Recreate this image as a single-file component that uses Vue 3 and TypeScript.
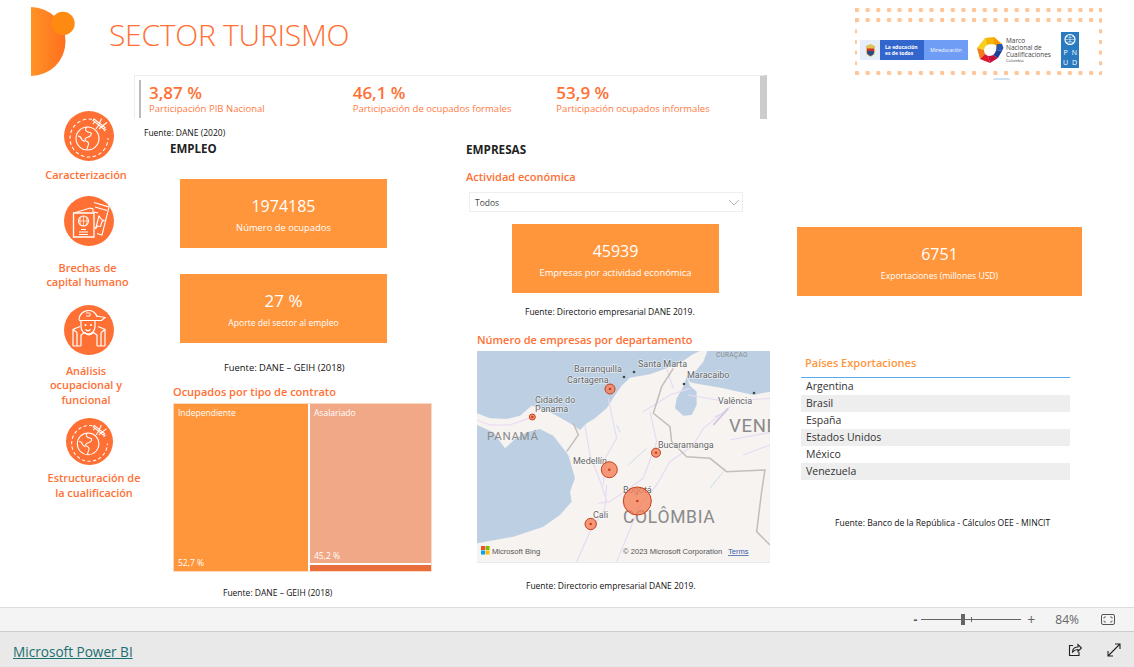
<script setup lang="ts">
const kpis = [
  { value: '3,87 %', label: 'Participación PIB Nacional' },
  { value: '46,1 %', label: 'Participación de ocupados formales' },
  { value: '53,9 %', label: 'Participación ocupados informales' },
]
const countries = ['Argentina', 'Brasil', 'España', 'Estados Unidos', 'México', 'Venezuela']
const bubbles = [
  { x: 133, y: 38, r: 5 },
  { x: 55.3, y: 66, r: 3 },
  { x: 132.3, y: 118.7, r: 8 },
  { x: 179, y: 101.7, r: 4.5 },
  { x: 160.3, y: 150, r: 14 },
  { x: 113.7, y: 173, r: 5.7 },
]
const cities = [
  { name: 'Barranquilla', x: 97, y: 21 },
  { name: 'Cartagena', x: 90, y: 32 },
  { name: 'Santa Marta', x: 161, y: 16 },
  { name: 'Maracaibo', x: 210, y: 27 },
  { name: 'Valência', x: 241, y: 53 },
  { name: 'Cidade do', x: 58, y: 52 },
  { name: 'Panamá', x: 58, y: 61 },
  { name: 'Bucaramanga', x: 181, y: 97 },
  { name: 'Medellín', x: 96, y: 113 },
  { name: 'Bogotá', x: 146, y: 142 },
  { name: 'Cali', x: 116, y: 167 },
]
</script>

<template>
  <div class="page">
    <div class="report">
      <header class="top">
        <div class="brand">
          <svg class="logo" width="50" height="80" viewBox="0 0 50 80">
            <defs>
              <linearGradient id="lg" x1="0" x2="1">
                <stop offset="0" stop-color="#ff9326" />
                <stop offset="1" stop-color="#ff6f1f" />
              </linearGradient>
            </defs>
            <path d="M0 7a34.5 34.5 0 0 1 0 69z" fill="url(#lg)" />
            <circle cx="32" cy="23.5" r="11.7" fill="#ff8a12" />
          </svg>
          <h1>SECTOR TURISMO</h1>
        </div>
        <div class="logos">
          <div class="logo-row">
            <div class="mined">
              <span class="shield">
                <svg width="13" height="15" viewBox="0 0 13 15">
                  <path d="M2 3l4.5-2L11 3v6c0 3-3 4-4.5 5C5 13 2 12 2 9z" fill="#e2c05a" />
                  <path d="M3 8h7v1.5c0 2-2 3-3.500 3.500C5 12.500 3 11.500 3 9.500z" fill="#2c4a8c" />
                  <path d="M3 5.5h7V8H3z" fill="#c9302c" />
                </svg>
              </span>
              <span class="edu">La educación<br />es de todos</span>
              <span class="min">Mineducación</span>
            </div>
            <svg class="mnc-logo" width="28" height="28" viewBox="0 0 28 28">
              <path d="M9 2l9-1 2 7-5 .5-4 1.5z" fill="#f7b500" />
              <path d="M18 1l8 7-5 6-1-4.5-2-1.500z" fill="#f59b00" />
              <path d="M1 12l8-10 2 8-3 4z" fill="#f8cf1e" />
              <path d="M1 12l7 2 1 4-5 5z" fill="#ef7d1a" />
              <path d="M4 23l5-5 3 2 2 7z" fill="#e0162b" />
              <path d="M14 27l-2-7 5-1 5 3z" fill="#c2103f" />
              <path d="M22 22l-5-3 3-5 6 1z" fill="#1f3f94" />
              <path d="M26 15l-6-1 1-6 5 0 1.5 4z" fill="#2a55b0" />
              <circle cx="14" cy="14" r="5.8" fill="#fff" />
            </svg>
            <div class="mnc">Marco<br />Nacional de<br />Cualificaciones<small>Colombia</small></div>
            <div class="undp">
              <svg class="globe" width="18" height="16" viewBox="0 0 18 16">
                <circle cx="9" cy="7.5" r="5" fill="none" stroke="#fff" stroke-width="1.2" />
                <path d="M4 7.5h10M9 2.5v10M5 4c3 2 5 2 8 0M5 11c3-2 5-2 8 0" fill="none" stroke="#fff" stroke-width=".5" />
              </svg>
              <b>P</b><b>N</b><b>U</b><b>D</b>
            </div>
          </div>
          <div class="arc"></div>
        </div>
      </header>

      <section class="kpis">
        <div class="kpi-wrap">
          <div v-for="k in kpis" :key="k.label" class="kpi">
            <strong>{{ k.value }}</strong>
            <span>{{ k.label }}</span>
          </div>
        </div>
      </section>

      <main class="body">
        <nav class="side">
          <div class="nav-item first">
            <svg class="ico" viewBox="0 0 50 50">
              <circle cx="25" cy="25" r="25" fill="#ff7034" />
              <g fill="none" stroke="#fff" stroke-width="1.1">
                <path d="M28 8.300A19 19 0 1 0 44 27" stroke-dasharray="3.5 2.5" />
                <circle cx="23.5" cy="27.5" r="11.5" />
                <path d="M23 16c-2.500 2-1.500 4 1 5s4 0 3 3-5 1.500-6 4 3 2 3.500 4-1.500 4-1.500 6.500" />
                <path d="M14 25c2 0 3 1 3.500 3s2.500 1 3 3" />
                <path d="M30 8l11 8.500-1.300 1.500L29 9.500zM37.500 7.500l-2.500 6-3 4.500M43 11.500l-4 3-4 3.500M29 13l2-2.500M40 20l2-2" />
              </g>
            </svg>
            <span class="nav-label">Caracterización</span>
          </div>
          <div class="nav-item second">
            <svg class="ico" viewBox="0 0 50 50">
              <circle cx="25" cy="25" r="25" fill="#ff7034" />
              <g fill="none" stroke="#fff" stroke-width="1.1">
                <path d="M30 6.500l15 4.500-7 28-5-1.500" />
                <path d="M31 11l12 3.500M30 16l4 1" />
                <path d="M35 20l-3.500 13 2-3 3 .5 1.500-5 2-1-2.500-1z" />
                <path d="M10 17l16-5 3 1v3" />
                <path d="M9.500 17h20.500v24H9.500z" stroke-width="1.3" />
                <circle cx="19.5" cy="25" r="5" />
                <path d="M14.5 25h10M19.5 20v10M17 21c-1.500 2.500-1.500 5.500 0 8M22 21c1.500 2.500 1.500 5.500 0 8" stroke-width=".7" />
                <path d="M17 33.500h5M15 36h9M15 38.500h9" />
              </g>
            </svg>
            <span class="nav-label">Brechas de<br />capital humano</span>
          </div>
          <div class="nav-item third">
            <svg class="ico" viewBox="0 0 50 50">
              <circle cx="25" cy="25" r="25" fill="#ff7034" />
              <g fill="none" stroke="#fff" stroke-width="1.2">
                <path d="M15 15c0-11 16-13 18-3" />
                <path d="M15 15.500h18M33 11l8 1.500-3.500 3H33" />
                <path d="M22 8h4v3h-4" stroke-width=".9" />
                <path d="M17 15.500v6c0 10 14 10 14 0v-6" />
                <path d="M21.500 24.500c1.500 1.500 3.500 1.500 5 0" />
                <path d="M9 41V24.500l7-3M41 41V24.500l-7-3" />
                <path d="M13 41V27.500M37 41V27.500M9 24.500l4 3M41 24.500l-4 3" />
                <path d="M17 41V30l3.500-2.500M33 41V30l-3.500-2.500M20.500 27.500c3 3 6 3 9 0" />
                <path d="M9 41h8M33 41h8" />
              </g>
              <circle cx="21.5" cy="20" r="1" fill="#fff" /><circle cx="27" cy="20" r="1" fill="#fff" />
            </svg>
            <span class="nav-label">Análisis<br />ocupacional y<br />funcional</span>
          </div>
          <div class="nav-item fourth">
            <svg class="ico small" viewBox="0 0 50 50">
              <circle cx="25" cy="25" r="25" fill="#ff7034" />
              <g fill="none" stroke="#fff" stroke-width="1.1">
                <path d="M28 8.300A19 19 0 1 0 44 27" stroke-dasharray="3.5 2.5" />
                <circle cx="23.5" cy="27.5" r="11.5" />
                <path d="M23 16c-2.500 2-1.500 4 1 5s4 0 3 3-5 1.500-6 4 3 2 3.500 4-1.500 4-1.500 6.500" />
                <path d="M14 25c2 0 3 1 3.500 3s2.500 1 3 3" />
                <path d="M30 8l11 8.500-1.300 1.500L29 9.500zM37.500 7.500l-2.500 6-3 4.500M43 11.500l-4 3-4 3.500M29 13l2-2.500M40 20l2-2" />
              </g>
            </svg>
            <span class="nav-label">Estructuración de<br />la cualificación</span>
          </div>
        </nav>

        <section class="col-emp">
          <p class="src src-pib">Fuente: DANE (2020)</p>
          <h2 class="emp-title">EMPLEO</h2>
          <div class="card c1"><b>1974185</b><span>Número de ocupados</span></div>
          <div class="card c2"><b>27 %</b><span>Aporte del sector al empleo</span></div>
          <p class="src geih">Fuente: DANE – GEIH (2018)</p>
          <h3 class="tree-title">Ocupados por tipo de contrato</h3>
          <div class="tree">
            <div class="t-ind"><span>Independiente</span><span>52,7 %</span></div>
            <div class="t-right">
              <div class="t-asa"><span>Asalariado</span><span>45,2 %</span></div>
              <div class="t-other"></div>
            </div>
          </div>
          <p class="src geih2">Fuente: DANE – GEIH (2018)</p>
        </section>

        <section class="col-emps">
          <h2 class="emps-title">EMPRESAS</h2>
          <h3 class="act">Actividad económica</h3>
          <div class="select">
            <span>Todos</span>
            <svg width="12" height="7" viewBox="0 0 12 7"><path d="M1 1l5 5 5-5" fill="none" stroke="#b5b5b5" /></svg>
          </div>
          <div class="card c3"><b>45939</b><span>Empresas por actividad económica</span></div>
          <p class="src dir">Fuente: Directorio empresarial DANE 2019.</p>
          <h3 class="map-title">Número de empresas por departamento</h3>
          <svg class="map" width="293" height="212" viewBox="0 0 293 212">
            <rect width="293" height="212" fill="#bdd0e3" />
            <g transform="translate(-7 -6) scale(.3333)">
              <path d="M21 205L60 220 110 222 150 212 185 182 215 190 260 212 300 235 330 255 350 235 375 220 410 190 432 155 455 122 480 98 540 88 590 70 630 55 665 30 690 18 712 18 700 50 675 80 650 95 660 112 690 118 760 130 850 150 900 140V653H21V595L130 575 220 545 270 510 305 470 300 440 315 400 295 330 250 272 210 252 170 262 135 282 105 310 70 262 21 240Z" fill="#f6f3f0" />
              <path d="M650 95L640 125 620 160 615 190 640 212 665 210 680 180 680 140 660 122Z" fill="#bdd0e3" />
              <path d="M730 18l55 0 5 28-25 12-30-10z" fill="#bdd0e3" />
              <g fill="none" stroke="#e8daf4" stroke-width="3.5">
                <path d="M345 240L360 330 395 420 410 470" />
                <path d="M415 160L440 280 405 340 400 420" />
                <path d="M540 200L560 290 520 400 420 470 385 475" />
                <path d="M410 420L405 490 360 560 320 650" />
                <path d="M655 150L770 170 900 160" />
                <path d="M780 185L700 250 670 300 600 350 560 420 510 480 440 650" />
                <path d="M780 285L900 262M820 330L900 300" />
                <path d="M21 225L60 240 120 240 190 215" />
                <path d="M520 200L600 150 660 130M590 70L610 130" />
              </g>
              <path d="M730 240L775 190" fill="none" stroke="#d3c2e3" stroke-width="5" />
              <g fill="none" stroke="#c9ddec" stroke-width="3">
                <path d="M440 240L450 262M475 360L530 310M720 430L760 380M735 215L760 205" />
              </g>
              <g fill="none" stroke="#c2bebb" stroke-width="4.5">
                <path d="M310 235L325 270 290 320" />
                <path d="M610 70L575 125 550 205 600 245 605 290 650 335 720 340 770 380 885 375 875 440 860 560 900 600" />
              </g>
            </g>
            <g fill="#444">
              <circle cx="147" cy="26" r="1.3" /><circle cx="157" cy="21" r="1.3" /><circle cx="207" cy="33" r="1.3" /><circle cx="277" cy="42" r="1.3" />
            </g>
            <text x="239" y="6" class="tiny">CURAÇAO</text>
            <g class="big">
              <text x="10" y="89" font-size="11.5">PANAMÁ</text>
              <text x="252" y="81" font-size="18.5">VENE</text>
              <text x="146" y="172" font-size="17.5">COLÔMBIA</text>
            </g>
            <g class="lab">
              <text v-for="c in cities" :key="c.name" :x="c.x" :y="c.y">{{ c.name }}</text>
            </g>
            <g v-for="b in bubbles" :key="b.x">
              <circle :cx="b.x" :cy="b.y" :r="b.r" fill="#f4815a" fill-opacity=".8" stroke="#c8401a" />
              <circle :cx="b.x" :cy="b.y" r="1.3" fill="#c8401a" />
            </g>
            <g>
              <rect x="4" y="195" width="4" height="4" fill="#f25022" /><rect x="8.5" y="195" width="4" height="4" fill="#7fba00" />
              <rect x="4" y="199.5" width="4" height="4" fill="#00a4ef" /><rect x="8.5" y="199.5" width="4" height="4" fill="#ffb900" />
              <text x="15" y="203" class="attr">Microsoft Bing</text>
            </g>
            <text x="146" y="203" class="attr">© 2023 Microsoft Corporation</text>
            <text x="251" y="203" class="attr terms">Terms</text>
          </svg>
          <p class="src dir2">Fuente: Directorio empresarial DANE 2019.</p>
        </section>

        <section class="col-exp">
          <div class="card c4"><b>6751</b><span>Exportaciones (millones USD)</span></div>
          <h3 class="paises">Países Exportaciones</h3>
          <ul class="list">
            <li v-for="c in countries" :key="c">{{ c }}</li>
          </ul>
          <p class="src ban">Fuente: Banco de la República - Cálculos OEE - MINCIT</p>
        </section>
      </main>
    </div>

    <div class="zoombar">
      <span class="minus">-</span>
      <span class="slider"><i class="thumb"></i><i class="tick"></i></span>
      <span class="plus">+</span>
      <span class="pct">84%</span>
      <svg width="14" height="11" viewBox="0 0 14 11"><rect x=".5" y=".5" width="13" height="10" rx="1.5" fill="none" stroke="#555" /><path d="M3 4.500V3h2M11 6.500V8H9M3 6.500V8h2M11 4.500V3H9" fill="none" stroke="#555" stroke-width=".8" /></svg>
    </div>
    <footer class="foot">
      <a class="pbi">Microsoft Power BI</a>
      <div class="foot-ico">
        <svg width="14" height="14" viewBox="0 0 14 14"><path d="M5 2.500H1.500v10H11V9M4.500 9c0-3.500 2.500-5 5.500-5V1.500L13.500 5 10 8.500V6.500C7.500 6.500 6 7.500 4.500 9z" fill="none" stroke="#222" stroke-width="1.1" /></svg>
        <svg width="14" height="14" viewBox="0 0 14 14"><path d="M1 13L13 1M8 1h5v5M1 8v5h5" fill="none" stroke="#222" stroke-width="1.1" /></svg>
      </div>
    </footer>
  </div>
</template>

<style>
html, body { margin: 0; background: #fff; }
</style>

<style scoped>
.page {
  width: 1134px;
  height: 667px;
  display: flex;
  flex-direction: column;
  overflow: hidden;
  font-family: "Open Sans", "Noto Sans", sans-serif;
  background: #fff;
}
.report { height: 607px; overflow: hidden; }
.top { display: flex; justify-content: space-between; height: 75px; }
.brand { display: flex; align-items: flex-start; padding-left: 31px; }
.logo { display: block; }
h1 {
  margin: 15px 0 0 28px;
  font-size: 30px;
  font-weight: 300;
  color: #ff7034;
  line-height: 40px;
  letter-spacing: -0.25px;
}
.logos {
  width: 247px;
  height: 67px;
  margin: 8px 32px 0 0;
  background-image:
    radial-gradient(circle at 2px 2px, #ffc596 2px, transparent 2.5px),
    radial-gradient(circle at 2px 2px, #ffc596 2px, transparent 2.5px),
    radial-gradient(circle at 2px 2px, #ffc596 2px, transparent 2.5px),
    radial-gradient(circle at 2px 2px, #ffc596 2px, transparent 2.5px),
    radial-gradient(circle at 2px 2px, #ffc596 2px, transparent 2.5px);
  background-size: 10.65px 4px, 10.65px 4px, 10.65px 4px, 4px 10.65px, 4px 10.65px;
  background-repeat: repeat-x, repeat-x, repeat-x, repeat-y, repeat-y;
  background-position: 0 0, 0 10px, 0 63px, -2.5px 0, 243.5px 0;
}
.logo-row { display: flex; align-items: center; margin: 0 0 0 5px; padding-top: 24px; height: 36px; }
.mined { display: flex; width: 108px; height: 20px; font-size: 5px; color: #fff; align-items: stretch; background: #e6eefb; }
.shield { width: 20px; display: flex; align-items: center; justify-content: center; }
.edu { background: #3366cc; width: 44px; padding: 4px 0 0 5px; box-sizing: border-box; font-weight: 700; line-height: 6px; white-space: nowrap; }
.min { background: #6f9cf5; flex: 1; text-align: center; line-height: 20px; font-size: 4.8px; white-space: nowrap; }
.mnc-logo { margin-left: 8px; flex: none; }
.mnc { font-size: 6.5px; line-height: 7px; color: #444; width: 46px; margin-left: 2px; white-space: nowrap; }
.mnc small { display: block; font-size: 4px; line-height: 5px; }
.undp { width: 18px; height: 36px; background: #2a7ac0; color: #fff; display: flex; flex-wrap: wrap; font-size: 7px; margin-left: 9px; flex: none; }
.undp .globe { width: 18px; height: 16px; display: block; }
.undp b { width: 9px; text-align: center; font-weight: 400; line-height: 10px; }
.arc { width: 17px; height: 2px; margin: 10px 0 0 138px; background: #cfe0f5; border-radius: 2px 2px 0 0; }

.kpis {
  margin-left: 134px;
  width: 633px;
  height: 44px;
  box-sizing: border-box;
  border-top: 1px solid #eee;
  border-right: 7px solid #ccc;
  border-left: 1px solid #eee;
  padding: 4px 0 0 4px;
}
.kpi-wrap { display: flex; height: 38px; border-left: 2px solid #bbb; padding-left: 8px; }
.kpi { width: 204px; display: flex; flex-direction: column; padding-top: 3px; }
.kpi strong { font-size: 17px; line-height: 19px; color: #ff7034; font-weight: 600; white-space: nowrap; }
.kpi span { font-size: 9.5px; line-height: 14px; color: #ff7a45; letter-spacing: .02px; white-space: nowrap; }

.body { display: flex; }
.side { width: 135px; flex: none; padding-left: 31px; box-sizing: border-box; }
.nav-item { display: flex; flex-direction: column; align-items: center; width: 110px; }
.nav-item .ico { width: 50px; height: 50px; display: block; margin-left: 6px; flex: none; }
.nav-item .ico.small { width: 47px; height: 47px; }
.nav-label { font-size: 10.9px; line-height: 14.5px; font-weight: 600; color: #ff7034; text-align: center; white-space: nowrap; }
.first { margin-top: -8px; }
.first .nav-label { margin-top: 7px; }
.second { margin-top: 13px; }
.second .nav-label { margin: 15px 0 0 3px; }
.third { margin-top: 15px; }
.third .nav-label { margin-top: 9px; }
.fourth { margin-top: 11px; }
.fourth .nav-label { margin: 6px 0 0 16px; }

.src { margin: 0; font-size: 8.5px; line-height: 12px; color: #111; white-space: nowrap; }
h2 { margin: 0; font-size: 11.5px; line-height: 14px; font-weight: 700; color: #222; }
h3 { margin: 0; font-size: 11px; line-height: 14px; font-weight: 600; color: #ff7034; white-space: nowrap; }

.col-emp { width: 315px; flex: none; }
.src-pib { margin: 8px 0 0 9px; }
.emp-title { margin: 3px 0 0 35px; }
.card {
  background: #ff963c;
  color: #fff;
  display: flex;
  flex-direction: column;
  align-items: center;
  width: 207px;
  height: 69px;
}
.card b { font-weight: 400; font-size: 16px; line-height: 24px; margin-top: 15px; }
.card span { font-size: 9.4px; font-weight: 500; line-height: 14px; margin-top: 3px; white-space: nowrap; }
.c1 { margin: 23px 0 0 45px; }
.c2 { margin: 26px 0 0 45px; }
.c2 b { font-size: 17px; }
.c2 span { font-size: 8.6px; }
.geih { margin: 19px 0 0 89px; font-size: 9.4px; }
.tree-title { margin: 11px 0 0 38px; }
.tree {
  margin: 4px 0 0 38px;
  width: 259px;
  height: 169px;
  box-sizing: border-box;
  border: 1px solid #fcd9c4;
  display: flex;
  gap: 2px;
  font-size: 8.5px;
  color: #fff;
}
.t-ind {
  width: 134px;
  background: #ff963c;
  display: flex;
  flex-direction: column;
  justify-content: space-between;
  padding: 3px 4px;
  box-sizing: border-box;
}
.t-right { flex: 1; display: flex; flex-direction: column; gap: 2px; }
.t-asa {
  flex: 1;
  background: #f1a886;
  display: flex;
  flex-direction: column;
  justify-content: space-between;
  padding: 3px 4px 2px;
}
.t-other { height: 6px; background: #ea6e3b; }
.geih2 { margin: 15px 0 0 88px; }

.col-emps { width: 340px; flex: none; }
.emps-title { margin: 23px 0 0 16px; font-size: 11.7px; }
.act { margin: 14px 0 0 16px; }
.select {
  margin: 8px 0 0 19px;
  width: 274px;
  height: 20px;
  box-sizing: border-box;
  border: 1px solid #eee;
  display: flex;
  align-items: center;
  justify-content: space-between;
  padding: 1px 2px 0 5px;
  font-size: 8.5px;
  color: #444;
}
.c3 { margin: 12px 0 0 62px; }
.dir { margin: 13px 0 0 75px; }
.map-title { margin: 15px 0 0 27px; }
.map { display: block; margin: 4px 0 0 27px; }
.lab text {
  font-size: 9px;
  fill: #666;
  font-family: "Roboto", sans-serif;
  stroke: #fff;
  stroke-width: 1.5px;
  stroke-opacity: .55;
  paint-order: stroke;
}
.tiny { font-size: 6.5px; fill: #888; font-family: "Roboto", sans-serif; letter-spacing: .3px; }
.big text { fill: #8a8a8a; font-family: "Roboto", sans-serif; letter-spacing: .7px; }
.attr { font-size: 7.6px; fill: #555; font-family: "Liberation Sans", sans-serif; }
.terms { fill: #3a5ea8; text-decoration: underline; }
.dir2 { margin: 17px 0 0 76px; }

.col-exp { flex: 1; }
.c4 { margin: 108px 0 0 7px; width: 285px; }
.c4 span { font-size: 8.6px; }
.paises { margin: 60px 0 0 15px; color: #ff963c; }
.list { margin: 7px 0 0 11px; padding: 0; list-style: none; width: 269px; border-top: 1px solid #55aaf0; font-size: 10.5px; color: #333; }
.list li { height: 17px; line-height: 17px; padding-left: 5px; }
.list li:nth-child(even) { background: #eee; }
.ban { margin: 37px 0 0 45px; font-size: 8.6px; }

.zoombar {
  height: 23px;
  background: #f4f4f4;
  border-top: 1px solid #ddd;
  border-bottom: 1px solid #ccc;
  display: flex;
  align-items: center;
  justify-content: flex-end;
  padding-right: 19px;
  color: #666;
  font-size: 12px;
}
.minus { font-weight: 700; margin-right: 4px; color: #555; }
.slider { width: 100px; height: 1px; background: #666; position: relative; }
.thumb { position: absolute; left: 40px; top: -5px; width: 4px; height: 11px; background: #666; }
.tick { position: absolute; left: 50px; top: -2px; width: 1px; height: 5px; background: #666; }
.plus { margin: 0 20px 0 6px; font-size: 14px; }
.pct { margin-right: 22px; }
.foot {
  flex: 1;
  background: #e9e9e9;
  display: flex;
  align-items: center;
  justify-content: space-between;
  padding: 0 13px;
}
.pbi { font-size: 13.6px; color: #1a6f6f; text-decoration: underline; padding-top: 3px; }
.foot-ico { display: flex; gap: 25px; }
</style>
